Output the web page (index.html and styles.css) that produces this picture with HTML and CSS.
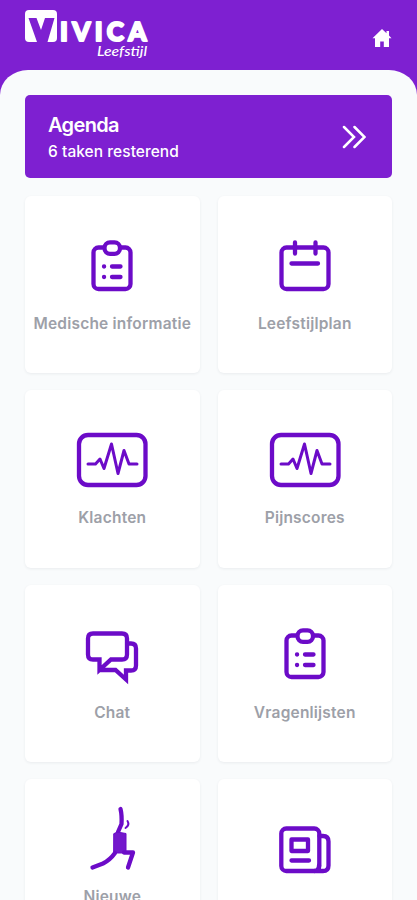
FILE: index.html
```html
<!DOCTYPE html>
<html lang="nl">
<head>
<meta charset="utf-8">
<meta name="viewport" content="width=device-width, initial-scale=1">
<title>Vivica Leefstijl</title>
<link rel="stylesheet" href="styles.css">
</head>
<body>
<svg class="defs" aria-hidden="true">
  <symbol id="clipboard" viewBox="0 0 52 52">
    <path d="M16.500 7.500H12.500a5 5 0 0 0-5 5V44a5 5 0 0 0 5 5h27a5 5 0 0 0 5-5V12.500a5 5 0 0 0-5-5h-4"/>
    <rect x="18.500" y="2.300" width="15.500" height="11.500" rx="5.500"/>
    <path d="M18 26.500h.1M26 26.500h8.500M18 37h.1M26 37h8.500"/>
  </symbol>
  <symbol id="monitor" viewBox="0 0 72 56">
    <rect x="3" y="3" width="66.500" height="50" rx="9"/>
    <path class="pulse" d="M12 32h7.500l4.500-5 4 9.500 7.500-24.500 6.500 29.500 6-23 5 13.500h8"/>
  </symbol>
</svg>
<header class="header">
  <svg class="logo" viewBox="0 0 126 54" role="img" aria-label="Vivica Leefstijl">
    <path class="logo-box" d="M5 2h24q4 0 4 4v24q0 4-4 4H5q-4 0-4-4V6q0-4 4-4z"/>
    <path class="logo-v" d="M4.500 10h8l4.500 12 4-12h9.500L23.500 34H13z"/>
    <text class="logo-name" x="36" y="33.300" textLength="86.500" lengthAdjust="spacing">IVICA</text>
    <text class="logo-sub" x="73" y="48" textLength="50" lengthAdjust="spacingAndGlyphs">Leefstijl</text>
  </svg>
  <svg class="home" viewBox="0 0 20 20" aria-label="Home"><path d="M10 1 0.500 10.200H3V19h5.200v-5.500h3.600V19H17v-8.800h2.500L17 7.500V3h-2.500v2.200z"/></svg>
</header>
<main class="panel">
  <section class="agenda">
    <div>
      <h1 class="agenda-title">Agenda</h1>
      <p class="agenda-text">6 taken resterend</p>
    </div>
    <svg class="chevrons" viewBox="0 0 24 24"><path d="m2 2 10 10L2 22M12.500 2l10 10-10 10"/></svg>
  </section>
  <nav class="grid">
    <a class="card"><svg class="icon"><use href="#clipboard"/></svg><span class="label">Medische informatie</span></a>
    <a class="card">
      <svg class="icon" viewBox="0 0 52 52"><rect x="2.500" y="7.500" width="47" height="41.500" rx="5"/><path d="M16 2.500v11M36.500 2.500v11M12.500 23.500H39"/></svg>
      <span class="label">Leefstijlplan</span>
    </a>
    <a class="card"><svg class="icon wide"><use href="#monitor"/></svg><span class="label">Klachten</span></a>
    <a class="card"><svg class="icon wide"><use href="#monitor"/></svg><span class="label">Pijnscores</span></a>
    <a class="card">
      <svg class="icon" viewBox="0 0 52 52"><path class="thin" d="M7 5.500h29q5 0 5 5v16q0 5-5 5H25L13.500 42V31.500H7q-5 0-5-5v-16q0-5 5-5zM41 15.500h4q5 0 5 5v17q0 5-5 5h-5v9L29.500 42H14"/></svg>
      <span class="label">Chat</span>
    </a>
    <a class="card"><svg class="icon"><use href="#clipboard"/></svg><span class="label">Vragenlijsten</span></a>
    <a class="card">
      <svg class="icon stretch" viewBox="0 0 52 66">
        <path d="M34.500 5 Q36 11 35.500 20L32 28"/>
        <path class="solid" d="M28 29.500q3-2 6-1l6 1V49H28z"/>
        <path d="M29 49Q24 56 17 59.500L6.500 63.500M38 48.500h9L42 63.500"/>
        <path class="face" d="M41.500 17q2.500 4-2 7"/>
      </svg>
      <span class="label">Nieuwe</span>
    </a>
    <a class="card">
      <svg class="icon news" viewBox="0 0 52 52"><rect x="2.300" y="5.500" width="38" height="42.500" rx="5"/><path d="M40.500 13h3.500q5.500 0 5.500 5.500v24q0 5.500-5.500 5.500h-8.500q4.500 0 4.500-5.500M12.500 37.500H30"/><rect x="12.500" y="16.500" width="16.500" height="11.500"/></svg>
      <span class="label">Nieuws</span>
    </a>
  </nav>
</main>
</body>
</html>
```
FILE: styles.css
```css
* { box-sizing: border-box; }

html,
body { height: 900px; overflow: hidden; }

body {
  margin: 0;
  background: #7e20d1;
  font-family: Inter, "Liberation Sans", sans-serif;
}

.defs { display: none; }

.header {
  display: flex;
  justify-content: space-between;
  height: 70px;
  padding: 8px 25px 0 24px;
}

.logo { width: 126px; height: 54px; overflow: visible; }
.logo-box { fill: #fff; }
.logo-v { fill: #7e20d1; }
.logo-name {
  fill: #fff;
  stroke: #fff;
  stroke-width: 2;
  stroke-linejoin: round;
  font: 900 26px Lato, sans-serif;
}
.logo-sub {
  fill: #fff;
  font: italic 500 13px Lato, sans-serif;
}

.home { width: 20px; height: 20px; margin-top: 20px; fill: #fff; }

.panel {
  height: 830px;
  overflow: hidden;
  padding: 25px 25px 0;
  border-radius: 28px 28px 0 0 / 25px 25px 0 0;
  background: #f9fbfc;
}

.agenda {
  display: flex;
  align-items: center;
  justify-content: space-between;
  height: 83px;
  padding: 3px 26px 0 23px;
  border-radius: 5px;
  background: #7e20d1;
  color: #fff;
}
.agenda-title { margin: 0; font-size: 20px; line-height: 26px; font-weight: 600; letter-spacing: -0.650px; }
.agenda-text { margin: 2px 0 0; font-size: 15.500px; line-height: 24px; font-weight: 500; letter-spacing: 0.050px; }
.chevrons { width: 24px; height: 24px; margin-top: -3px; fill: none; stroke: #fff; stroke-width: 2.500; stroke-linecap: round; }

.grid {
  display: grid;
  grid-template-columns: 1fr 1fr;
  grid-auto-rows: 177.300px;
  gap: 17px 18px;
  margin-top: 18px;
}

.card {
  display: flex;
  flex-direction: column;
  align-items: center;
  padding-top: 43.500px;
  border-radius: 6px;
  background: #fff;
  box-shadow: 0 1px 3px rgba(30, 40, 60, 0.070);
}

.icon {
  width: 52px;
  height: 52px;
  flex: none;
  overflow: visible;
  fill: none;
  stroke: #6c0bc8;
  stroke-width: 4.300;
  stroke-linecap: round;
  stroke-linejoin: round;
}
.wide { width: 72px; height: 56px; margin: -2px 0; }
.pulse { stroke-width: 3; }
.thin { stroke-linecap: butt; stroke-linejoin: miter; }
.stretch { height: 66px; margin: -18px 0 -6px; }
.news { margin: 0.500px 0 3.500px; }
.solid { fill: #7418cc; stroke-width: 1; }
.face { stroke-width: 2; }

.label {
  margin-top: 20.700px;
  color: #9da0a8;
  font-size: 15.500px;
  line-height: 24px;
  font-weight: 600;
  letter-spacing: 0.200px;
  text-align: center;
  white-space: nowrap;
}
```
